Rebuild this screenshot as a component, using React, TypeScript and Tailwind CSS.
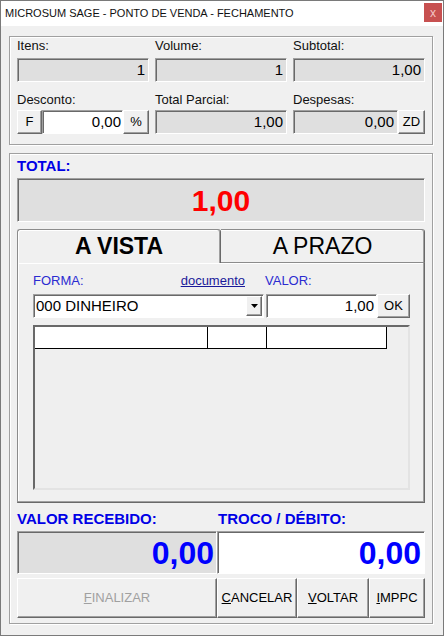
import React from 'react';

const sunken =
  'border border-t-[#a0a0a0] border-l-[#a0a0a0] border-r-white border-b-white shadow-[inset_1px_1px_0_#696969]';
const raised =
  'border border-t-white border-l-white border-r-[#696969] border-b-[#696969] shadow-[inset_-1px_-1px_0_#a0a0a0] bg-[#f0f0f0]';
const groupBox = 'border border-[#a0a0a0] shadow-[inset_1px_1px_0_#fff,1px_1px_0_#fff]';

const ReadOnly: React.FC<{ value: string; className?: string }> = ({ value, className = '' }) => (
  <div className={`${sunken} bg-[#dfdfdf] h-[24px] flex items-center justify-end pr-[3px] text-[15px] ${className}`}>
    {value}
  </div>
);

const Btn: React.FC<{ children: React.ReactNode; className?: string }> = ({ children, className = '' }) => (
  <div className={`${raised} flex items-center justify-center ${className}`}>{children}</div>
);

const Label: React.FC<{ children: React.ReactNode }> = ({ children }) => (
  <div className="h-[16px] leading-[16px] text-[13px] text-[#111]">{children}</div>
);

const App: React.FC = () => {
  return (
    <div className="w-[444px] h-[636px] border border-[#7a7a7a] bg-[#f0f0f0] flex flex-col font-['Liberation_Sans',Arial,sans-serif] text-black overflow-hidden">
      {/* title bar */}
      <div className="h-[25px] bg-white flex items-start justify-between shrink-0">
        <span className="pl-[4px] pt-[5px] text-[11px] leading-[14px] text-[#111]">
          MICROSUM SAGE - PONTO DE VENDA - FECHAMENTO
        </span>
        <div className="mt-[2px] mr-[1px] w-[18px] h-[19px] bg-[#c75050] flex items-center justify-center text-[#f3c6c6] text-[12px] leading-none">
          x
        </div>
      </div>

      <div className="pl-[8px] pr-[10px] pt-[10px] flex flex-col">
        {/* totals group */}
        <div className={`${groupBox} px-[7px] pt-[1px] pb-[10px]`}>
          <div className="grid grid-cols-3 gap-x-[6px]">
            <div>
              <Label>Itens:</Label>
              <ReadOnly value="1" className="mt-[4px]" />
            </div>
            <div>
              <Label>Volume:</Label>
              <ReadOnly value="1" className="mt-[4px]" />
            </div>
            <div>
              <Label>Subtotal:</Label>
              <ReadOnly value="1,00" className="mt-[4px]" />
            </div>
            <div className="mt-[10px]">
              <Label>Desconto:</Label>
              <div className="mt-[2px] flex h-[24px]">
                <Btn className="w-[25px] text-[13px]">F</Btn>
                <div className={`${sunken} bg-white flex-1 flex items-center justify-end pr-[1px] text-[15px]`}>0,00</div>
                <Btn className="w-[26px] text-[13px]">%</Btn>
              </div>
            </div>
            <div className="mt-[10px]">
              <Label>Total Parcial:</Label>
              <ReadOnly value="1,00" className="mt-[2px]" />
            </div>
            <div className="mt-[10px]">
              <Label>Despesas:</Label>
              <div className="mt-[2px] flex h-[24px]">
                <ReadOnly value="0,00" className="flex-1" />
                <Btn className="w-[27px] text-[13px]">ZD</Btn>
              </div>
            </div>
          </div>
        </div>

        {/* payment group */}
        <div className={`${groupBox} mt-[8px] px-[7px] pt-[3px] pb-[5px] flex flex-col`}>
          <div className="h-[18px] leading-[18px] text-[15px] font-bold text-[#0000e6]">TOTAL:</div>
          <div className={`${sunken} bg-[#dfdfdf] mt-[3px] h-[44px] flex items-center justify-center text-[30px] font-bold text-[#ff0000]`}>
            1,00
          </div>

          {/* tabs */}
          <div className="mt-[7px] flex h-[33px] relative z-10">
            <div className="w-[204px] h-[34px] border border-b-0 border-[#8c8c8c] border-r-[#696969] shadow-[inset_-1px_0_0_#a0a0a0,inset_1px_1px_0_#fff] rounded-t-[3px] bg-[#f0f0f0] flex items-center justify-center text-[23px] font-bold">
              A VISTA
            </div>
            <div className="w-[204px] h-[33px] border border-b-0 border-l-0 border-[#8c8c8c] border-r-[#696969] shadow-[inset_-1px_0_0_#a0a0a0,inset_0_1px_0_#fff] rounded-tr-[3px] bg-[#f0f0f0] flex items-center justify-center text-[23px]">
              A PRAZO
            </div>
          </div>
          <div className="h-[241px] border border-t-[#8c8c8c] border-l-[#8c8c8c] border-r-[#696969] border-b-[#696969] shadow-[inset_-1px_-1px_0_#a0a0a0,inset_1px_1px_0_#fff] pl-[15px] pr-[13px] pt-[10px] flex flex-col">
            <div className="flex h-[16px] leading-[16px] text-[13px]">
              <div className="w-[231px] flex justify-between pr-[19px]">
                <span className="text-[#2b2bd0]">FORMA:</span>
                <span className="text-[#1a1a9a] underline">documento</span>
              </div>
              <span className="ml-[1px] text-[#2b2bd0]">VALOR:</span>
            </div>
            <div className="mt-[5px] flex h-[24px]">
              <div className={`${sunken} bg-white w-[231px] flex items-center justify-between pl-[2px] pr-[1px] text-[15px]`}>
                <span>000 DINHEIRO</span>
                <div className={`${raised} w-[16px] h-[20px] flex items-center justify-center`}>
                  <svg width="7" height="4" viewBox="0 0 7 4">
                    <path d="M0 0h7L3.5 4z" fill="#000" />
                  </svg>
                </div>
              </div>
              <div className={`${sunken} bg-white ml-[2px] w-[111px] flex items-center justify-end pr-[2px] text-[15px]`}>1,00</div>
              <Btn className="w-[33px] text-[13px]">OK</Btn>
            </div>
            <div className="mt-[7px] h-[165px] w-[377px] border-2 border-t-[#696969] border-l-[#696969] border-r-[#e3e3e3] border-b-[#e3e3e3] bg-[#efefef]">
              <div className="flex h-[22px]">
                <div className="w-[173px] bg-white border-r border-b border-black" />
                <div className="w-[59px] bg-white border-r border-b border-black" />
                <div className="w-[120px] bg-white border-r border-b border-black" />
              </div>
            </div>
          </div>

          {/* received / change */}
          <div className="mt-[7px] flex h-[18px] leading-[18px] text-[15px] font-bold text-[#0000e6]">
            <span className="w-[201px]">VALOR RECEBIDO:</span>
            <span>TROCO / DÉBITO:</span>
          </div>
          <div className="mt-[3px] flex h-[43px] text-[32px] font-bold text-[#0000ff]">
            <div className={`${sunken} bg-[#dfdfdf] w-[200px] flex items-center justify-end pr-[2px]`}>0,00</div>
            <div className={`${sunken} bg-white flex-1 flex items-center justify-end pr-[3px]`}>0,00</div>
          </div>

          {/* buttons */}
          <div className="mt-[4px] flex h-[40px] text-[13px]">
            <Btn className="w-[200px] text-[#a0a0a0]">
              <span><u>F</u>INALIZAR</span>
            </Btn>
            <Btn className="w-[80px]">
              <span><u>C</u>ANCELAR</span>
            </Btn>
            <Btn className="w-[72px]">
              <span><u>V</u>OLTAR</span>
            </Btn>
            <Btn className="flex-1">
              <span><u>I</u>MPPC</span>
            </Btn>
          </div>
        </div>
      </div>
    </div>
  );
};

export default App;
